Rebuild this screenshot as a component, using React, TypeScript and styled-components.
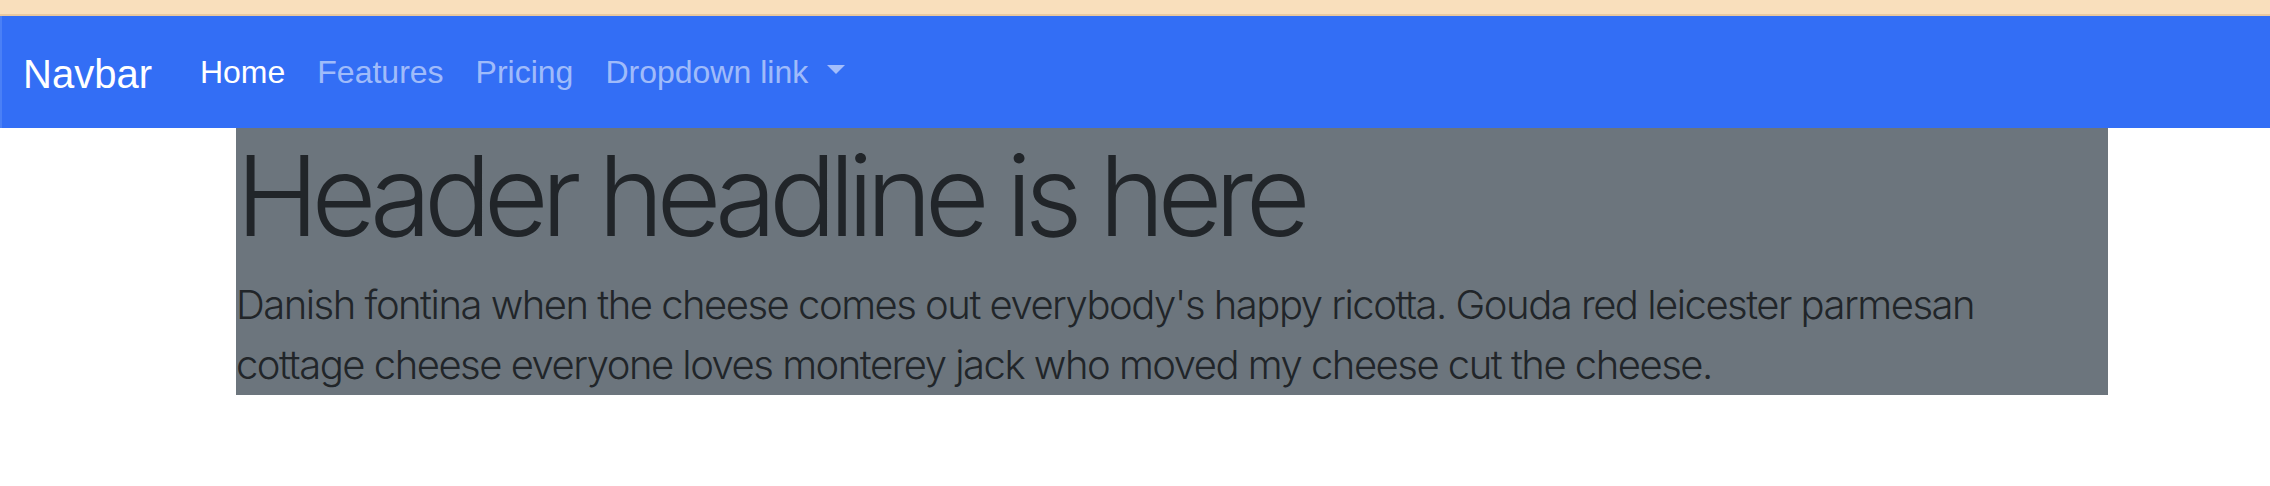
import React from "react";
import styled, { createGlobalStyle } from "styled-components";

const GlobalStyle = createGlobalStyle`
  html, body {
    margin: 0;
    padding: 0;
    background: #ffffff;
  }
  * { box-sizing: border-box; }
`;

const TopStrip = styled.div`
  height: 16px;
  background: #f9dfbc;
  border-bottom: 2px solid #e9c9a0;
`;

const Navbar = styled.nav`
  display: flex;
  align-items: center;
  height: 112px;
  padding-left: 21px;
  background: #336ef5;
  border-left: 2px solid #4a80f6;
  font-family: "Liberation Sans", Arial, sans-serif;
`;

const Brand = styled.a`
  font-size: 40px;
  line-height: 60px;
  color: #ffffff;
  text-decoration: none;
  margin-right: 32px;
  padding-top: 4px;
`;

const NavList = styled.ul`
  display: flex;
  align-items: center;
  list-style: none;
  margin: 0;
  padding: 0;
`;

const NavLink = styled.a<{ $active?: boolean }>`
  display: inline-flex;
  align-items: center;
  padding: 0 16px;
  font-size: 32px;
  line-height: 48px;
  color: ${(p) => (p.$active ? "#ffffff" : "rgba(255, 255, 255, 0.55)")};
  text-decoration: none;
`;

const Caret = styled.span`
  display: inline-block;
  width: 0;
  height: 0;
  margin-left: 19px;
  margin-top: -6px;
  border-top: 9.6px solid rgba(255, 255, 255, 0.55);
  border-left: 9.6px solid transparent;
  border-right: 9.6px solid transparent;
`;

const Main = styled.main`
  padding-left: 236px;
`;

const Header = styled.header`
  width: 1872px;
  background: #6c757d;
  color: #212529;
  font-family: "Inter", "Helvetica Neue", Arial, sans-serif;
  font-weight: 300;
`;

const Headline = styled.h1`
  margin: 0 0 13px;
  font-size: 112px;
  font-weight: 300;
  line-height: 134.4px;
  letter-spacing: -7.5px;
`;

const Lead = styled.p`
  margin: 0;
  max-width: 1830px;
  font-size: 40px;
  font-weight: 300;
  line-height: 60px;
  letter-spacing: -1.5px;
`;

export default function App() {
  return (
    <>
      <GlobalStyle />
      <TopStrip />
      <Navbar>
        <Brand href="#">Navbar</Brand>
        <NavList>
          <li>
            <NavLink href="#" $active>
              Home
            </NavLink>
          </li>
          <li>
            <NavLink href="#">Features</NavLink>
          </li>
          <li>
            <NavLink href="#">Pricing</NavLink>
          </li>
          <li>
            <NavLink href="#">
              Dropdown link
              <Caret />
            </NavLink>
          </li>
        </NavList>
      </Navbar>
      <Main>
        <Header>
          <Headline>Header headline is here</Headline>
          <Lead>
            Danish fontina when the cheese comes out everybody's happy ricotta.
            Gouda red leicester parmesan cottage cheese everyone loves monterey
            jack who moved my cheese cut the cheese.
          </Lead>
        </Header>
      </Main>
    </>
  );
}
